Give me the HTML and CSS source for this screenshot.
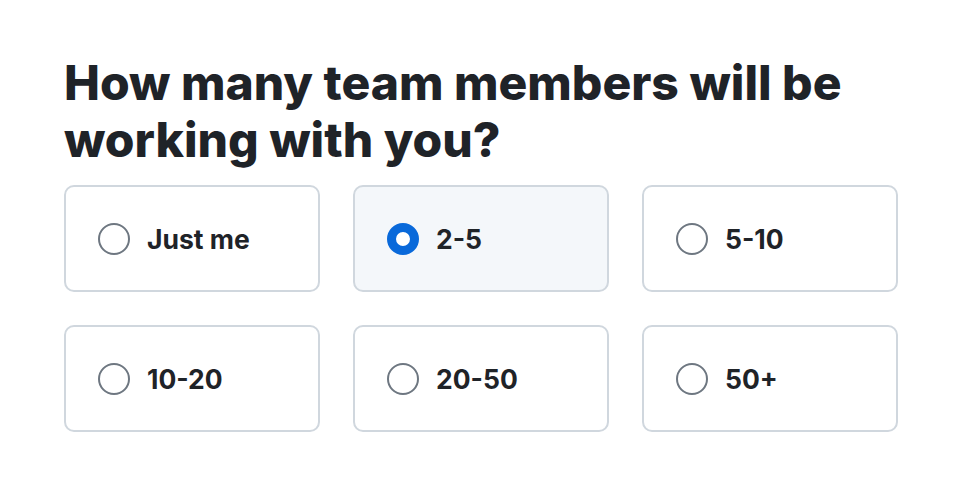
FILE: index.html
```html
<!DOCTYPE html>
<html lang="en">
<head>
<meta charset="utf-8">
<link rel="stylesheet" href="styles.css">
</head>
<body>
<main class="page">
  <h1 class="title">How many team members will be working with you?</h1>
  <div class="options">
    <label class="option"><span class="radio"></span><span class="label">Just me</span></label>
    <label class="option selected"><span class="radio"></span><span class="label">2-5</span></label>
    <label class="option"><span class="radio"></span><span class="label">5-10</span></label>
    <label class="option"><span class="radio"></span><span class="label">10-20</span></label>
    <label class="option"><span class="radio"></span><span class="label">20-50</span></label>
    <label class="option"><span class="radio"></span><span class="label">50+</span></label>
  </div>
</main>
</body>
</html>
```
FILE: styles.css
```css
html, body {
  margin: 0;
  padding: 0;
  background: #ffffff;
}
body {
  font-family: Inter, "Noto Sans", sans-serif;
  color: #1f2328;
}
.page {
  padding: 54px 64px 0 64px;
  width: 834px;
}
.title {
  margin: 0 0 17px 0;
  font-size: 48px;
  line-height: 57px;
  font-weight: 800;
  letter-spacing: 0;
  width: 820px;
}
.options {
  display: grid;
  grid-template-columns: repeat(3, 256px);
  grid-auto-rows: 107px;
  column-gap: 33px;
  row-gap: 33px;
}
.option {
  box-sizing: border-box;
  border: 2px solid #d0d7de;
  border-radius: 10px;
  display: flex;
  align-items: center;
  padding-left: 32px;
  gap: 17px;
  background: #ffffff;
}
.option.selected {
  background: #f4f7fa;
}
.radio {
  box-sizing: border-box;
  width: 32px;
  height: 32px;
  border-radius: 50%;
  border: 2px solid #6e7781;
  background: #ffffff;
  flex: none;
}
.selected .radio {
  border: 9px solid #0969da;
}
.label {
  font-size: 26.5px;
  font-weight: 700;
  color: #1f2328;
}
```
